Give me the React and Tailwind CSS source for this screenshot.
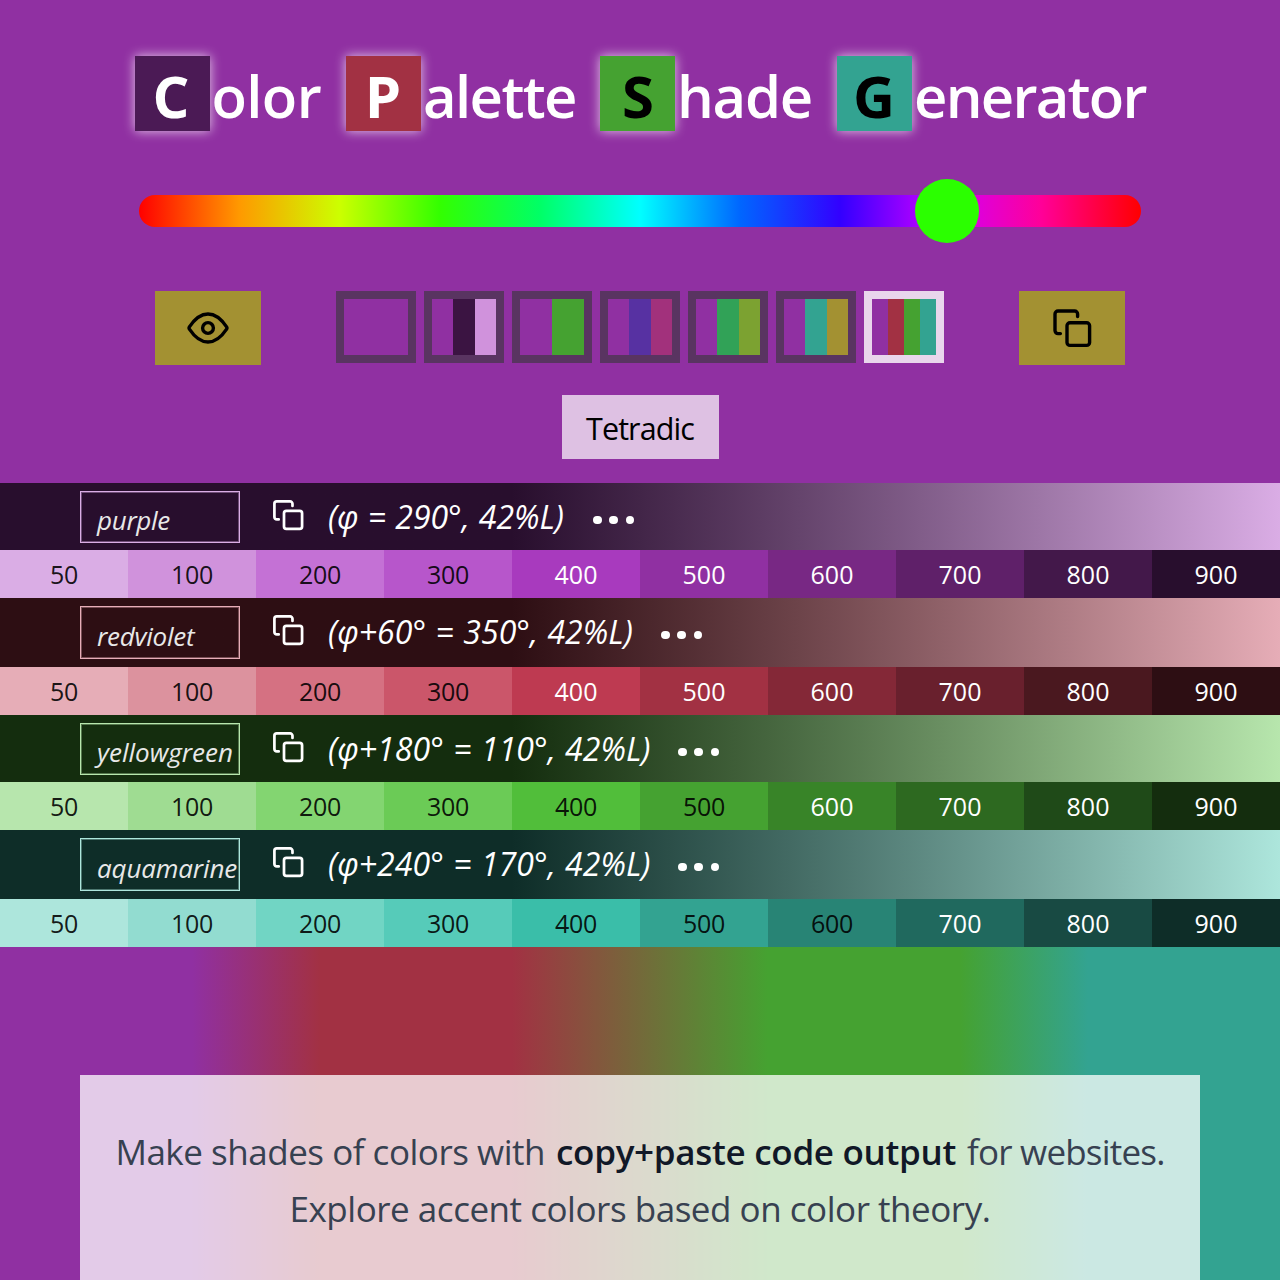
import React from "react";

const words = [
  { letter: "C", rest: "olor", box: "bg-[#4b1a55] text-white", text: "tracking-[-0.6px]", width: "w-[211.5px]", nudge: "pr-0.5" },
  { letter: "P", rest: "alette", box: "bg-[#a23143] text-white", text: "tracking-[-1.6px]", width: "w-[254px]", nudge: "pr-px" },
  { letter: "S", rest: "hade", box: "bg-[#45a231] text-black", text: "tracking-[-1.3px]", width: "w-[237px]", nudge: "pl-px" },
  { letter: "G", rest: "enerator", box: "bg-[#33a391] text-black", text: "tracking-[-1.75px]", width: "w-[310px]", nudge: "pr-px" },
];

const schemes = [
  ["bg-[#9030a2]"],
  ["bg-[#9030a2]", "bg-[#3b1442]", "bg-[#d092dc]"],
  ["bg-[#9030a2]", "bg-[#45a231]"],
  ["bg-[#9030a2]", "bg-[#5731a2]", "bg-[#a2317c]"],
  ["bg-[#9030a2]", "bg-[#31a257]", "bg-[#7ca231]"],
  ["bg-[#9030a2]", "bg-[#33a391]", "bg-[#a39132]"],
  ["bg-[#9030a2]", "bg-[#a23143]", "bg-[#45a231]", "bg-[#33a391]"],
];

const steps = ["50", "100", "200", "300", "400", "500", "600", "700", "800", "900"];

const palettes = [
  {
    name: "purple",
    formula: "(φ = 290°, 42%L)",
    height: "h-[67px]",
    inputHeight: "h-[52px]",
    input: "border-[#daade5] shadow-[inset_0_0_0_1px_#daade566]",
    nameText: "tracking-[-0.3px]",
    formulaText: "w-[238px] tracking-[-0.05px]",
    gradient: "from-[#280e2d] to-[#daade5]",
    darkUntil: 4,
    shades: ["bg-[#daade5]", "bg-[#d092dc]", "bg-[#c471d5]", "bg-[#b756cb]", "bg-[#a83abe]", "bg-[#9030a2]", "bg-[#782884]", "bg-[#5f2069]", "bg-[#43184a]", "bg-[#280e2d]"],
  },
  {
    name: "redviolet",
    formula: "(φ+60° = 350°, 42%L)",
    height: "h-[69px]",
    inputHeight: "h-[53px]",
    input: "border-[#e6adb7] shadow-[inset_0_0_0_1px_#e6adb766]",
    nameText: "tracking-[-0.25px]",
    formulaText: "w-[306px] tracking-[0.05px]",
    gradient: "from-[#2d0e13] to-[#e6adb7]",
    darkUntil: 4,
    shades: ["bg-[#e6adb7]", "bg-[#dc929e]", "bg-[#d57182]", "bg-[#cb566a]", "bg-[#be3a51]", "bg-[#a23143]", "bg-[#842837]", "bg-[#69202d]", "bg-[#4a181f]", "bg-[#2d0e13]"],
  },
  {
    name: "yellowgreen",
    formula: "(φ+180° = 110°, 42%L)",
    height: "h-[67px]",
    inputHeight: "h-[52px]",
    input: "border-[#b7e6ad] shadow-[inset_0_0_0_1px_#b7e6ad66]",
    nameText: "tracking-[0px]",
    formulaText: "w-[323px] tracking-[0.05px]",
    gradient: "from-[#142d0e] to-[#b7e6ad]",
    darkUntil: 6,
    shades: ["bg-[#b7e6ad]", "bg-[#9fdc92]", "bg-[#83d571]", "bg-[#6bcb56]", "bg-[#51be3a]", "bg-[#45a231]", "bg-[#388428]", "bg-[#2d6920]", "bg-[#1f4a18]", "bg-[#142d0e]"],
  },
  {
    name: "aquamarine",
    formula: "(φ+240° = 170°, 42%L)",
    height: "h-[69px]",
    inputHeight: "h-[53px]",
    input: "border-[#ade6dc] shadow-[inset_0_0_0_1px_#ade6dc66]",
    nameText: "tracking-[-0.15px]",
    formulaText: "w-[323px] tracking-[0.05px]",
    gradient: "from-[#0e2d28] to-[#ade6dc]",
    darkUntil: 7,
    shades: ["bg-[#ade6dc]", "bg-[#92dcd0]", "bg-[#71d5c4]", "bg-[#56cbb9]", "bg-[#3abea9]", "bg-[#33a391]", "bg-[#288475]", "bg-[#20695e]", "bg-[#184a43]", "bg-[#0e2d28]"],
  },
];

function EyeIcon() {
  return (
    <svg className="h-8 w-[42px]" viewBox="-21 -16 42 32" fill="none" stroke="currentColor" strokeWidth="3.4" strokeLinejoin="round">
      <path d="M-18.6 1.1a2 2 0 0 1 0-2.2C-13 -9.5 -7 -14 0 -14S13 -9.5 18.6 -1.1a2 2 0 0 1 0 2.2C13 9.5 7 14 0 14S-13 9.5 -18.6 1.1Z" />
      <circle r="5.4" />
    </svg>
  );
}

function CopyIcon({ className }) {
  return (
    <svg className={className} viewBox="0 0 40 40" fill="none" stroke="currentColor" strokeWidth="3.4" strokeLinecap="round" strokeLinejoin="round">
      <path d="M25.6 8.6V6a3 3 0 0 0-3-3H6a3 3 0 0 0-3 3v16.600a3 3 0 0 0 3 3h2.400" />
      <rect x="15" y="14.800" width="22.600" height="22.600" rx="3" />
    </svg>
  );
}

function Palette({ p }) {
  return (
    <section>
      <div className={`flex items-start bg-linear-to-r from-40% pl-20 text-white ${p.height} ${p.gradient}`}>
        <div className={`mt-2 flex w-40 items-center overflow-hidden border pl-4 pt-1.5 ${p.inputHeight} ${p.input}`}>
          <span className={`whitespace-nowrap text-[26px] italic leading-none text-[#e8e8e8] ${p.nameText}`}>{p.name}</span>
        </div>
        <CopyIcon className="ml-8 mt-4 h-8 w-8" />
        <div className={`ml-6 mt-3 whitespace-nowrap text-[32px] italic leading-[44px] [word-spacing:1px] ${p.formulaText}`}>{p.formula}</div>
        <div className="ml-[27px] mt-[32.5px] flex gap-[7.7px]">
          <i className="size-[8.7px] rounded-full bg-white" />
          <i className="size-[8.7px] rounded-full bg-white" />
          <i className="size-[8.7px] rounded-full bg-white" />
        </div>
      </div>
      <div className="grid h-12 grid-cols-10 text-[25px]">
        {steps.map((s, i) => (
          <div key={s} className={`flex items-center justify-center leading-none ${p.shades[i]} ${i < p.darkUntil ? "tracking-[-0.3px] text-black/90" : "font-medium text-white"}`}>
            <span>{s}</span>
          </div>
        ))}
      </div>
    </section>
  );
}

export default function App() {
  return (
    <main className="h-[1280px] w-[1280px] overflow-hidden bg-[#9030a2] font-['Open_Sans','Noto_Sans',sans-serif]">
      <header className="h-[483px]">
        <h1 className="flex pl-[134.5px] pt-14 text-[58px] font-semibold text-white">
          {words.map((w) => (
            <span key={w.letter} className={`flex h-[75px] items-center whitespace-nowrap ${w.width}`}>
              <span className={`flex size-[75px] shrink-0 items-center justify-center font-bold leading-none shadow-[0_0_11px_rgba(255,255,255,0.75)] ${w.nudge} ${w.box}`}>
                <span className="pt-[5px]">{w.letter}</span>
              </span>
              <span className={`pl-0.5 pt-[5px] leading-none ${w.text}`}>{w.rest}</span>
            </span>
          ))}
        </h1>

        <div className="ml-[139px] mt-16 flex h-8 w-[1002px] items-center rounded-full bg-[linear-gradient(to_right,#ff0000,#ff9900,#ccff00,#33ff00,#00ff66,#00ffff,#0066ff,#3300ff,#cc00ff,#ff0099,#ff0000)]">
          <div className="ml-[776px] size-16 shrink-0 rounded-full bg-[#2bff00]" />
        </div>

        <div className="mt-16 flex items-start justify-between px-[155px]">
          <button className="flex h-[74px] w-[106px] items-center justify-center bg-[#a39132] text-black">
            <EyeIcon />
          </button>
          <div className="flex gap-2">
            {schemes.map((colors, i) => (
              <div key={i} className={`flex h-[72px] w-20 border-8 ${i === 6 ? "border-[#e9d6ec]" : "border-[#593461]"}`}>
                {colors.map((c) => (
                  <div key={c} className={`flex-1 ${c}`} />
                ))}
              </div>
            ))}
          </div>
          <button className="flex h-[74px] w-[106px] items-center justify-center bg-[#a39132] text-black">
            <CopyIcon className="size-10" />
          </button>
        </div>

        <div className="mt-[30px] flex justify-center">
          <div className="flex h-16 w-[157px] items-center justify-center bg-[#dec1e3] pt-1 text-[30.5px] tracking-[-0.9px] text-black">
            <span>Tetradic</span>
          </div>
        </div>
      </header>

      {palettes.map((p) => (
        <Palette key={p.name} p={p} />
      ))}

      <div className="h-[333px] bg-[linear-gradient(to_right,#9030a2_15%,#a23143_25%,#a23143_40%,#45a231_60%,#45a231_75%,#33a391_85%)] px-20 pt-32">
        <div className="h-full bg-white/75 pt-[48px] text-center text-[35px] leading-[57px] text-[#374151]">
          <p className="flex justify-center gap-[11px] whitespace-nowrap">
            <span className="tracking-[-0.48px]">Make shades of colors with</span>
            <strong className="font-semibold tracking-[-0.3px] text-[#111827]">copy+paste code output</strong>
            <span className="tracking-[-0.8px]">for websites.</span>
          </p>
          <p className="tracking-[-0.47px]">Explore accent colors based on color theory.</p>
        </div>
      </div>
    </main>
  );
}
